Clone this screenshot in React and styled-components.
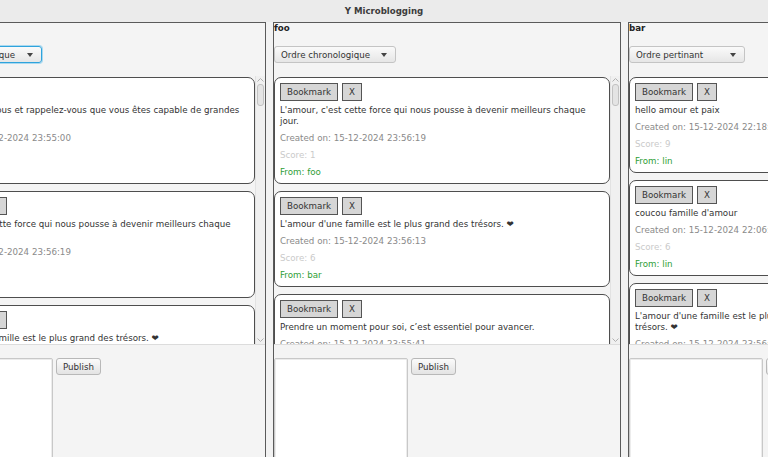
import React from 'react'
import styled, { createGlobalStyle } from 'styled-components'

const Global = createGlobalStyle`
  html, body {
    margin: 0;
    padding: 0;
    background: #f2f2f2;
    font-family: "DejaVu Sans", "Liberation Sans", sans-serif;
    font-size: 8.7px;
    color: #333;
  }
  * { box-sizing: border-box; }
`

const Window = styled.div`
  width: 768px;
  height: 457px;
  display: flex;
  flex-direction: column;
  overflow: hidden;
  background: #f2f2f2;
`

const TitleBar = styled.div`
  height: 22px;
  flex-shrink: 0;
  display: flex;
  align-items: center;
  justify-content: center;
  background: #ebebeb;
  font-weight: bold;
  font-size: 8.6px;
  color: #3c3c3c;
`

const Viewport = styled.div`
  flex: 1;
  min-height: 0;
  overflow: hidden;
`

const Columns = styled.div`
  display: flex;
  gap: 7px;
  height: 100%;
  margin-left: -82px;
`

const Column = styled.section`
  width: ${p => p.$width}px;
  flex-shrink: 0;
  display: flex;
  flex-direction: column;
  border: 1px solid #5a5a5a;
  border-bottom: none;
  background: #f4f4f4;
  overflow: hidden;
`

const ColumnTitle = styled.div`
  height: 11px;
  flex-shrink: 0;
  line-height: 11px;
  font-weight: bold;
  color: #222;
`

const Combo = styled.div`
  width: ${p => p.$width}px;
  height: 17px;
  flex-shrink: 0;
  margin-top: 12px;
  display: flex;
  align-items: center;
  justify-content: space-between;
  padding: 0 6px 0 6px;
  border: 1px solid ${p => (p.$focused ? '#2fa3dc' : '#c4c4c4')};
  border-radius: 3px;
  background: linear-gradient(#fafafa, #e6e6e6);
  box-shadow: ${p => (p.$focused ? '0 0 0 1px #a9d9f0' : 'none')};
  color: #333;
  white-space: nowrap;
`

const Caret = styled.span`
  width: 0;
  height: 0;
  border-left: 3px solid transparent;
  border-right: 3px solid transparent;
  border-top: 4px solid #444;
  margin-right: 2px;
`

const ListArea = styled.div`
  margin-top: 13px;
  height: 268px;
  display: flex;
  flex-shrink: 0;
`

const Cards = styled.div`
  flex: 1;
  min-width: 0;
  overflow: hidden;
  display: flex;
  flex-direction: column;
  gap: 7px;
  padding-top: 1px;
`

const Card = styled.article`
  flex-shrink: 0;
  display: flex;
  flex-direction: column;
  gap: 6px;
  padding: 5px 5px 5px;
  background: #fff;
  border: 1px solid #4e4e4e;
  border-radius: 7px;
  line-height: 11px;
`

const ButtonRow = styled.div`
  display: flex;
  gap: 4px;
  margin-bottom: -2px;
`

const SquareButton = styled.button`
  height: 18px;
  padding: 0 6px;
  border: 1px solid #555;
  border-radius: 0;
  background: #d6d6d6;
  font: inherit;
  color: #333;
`

const Label = styled.div`
  color: ${p => p.$color || '#333'};
`

const ScrollBar = styled.div`
  width: 10px;
  flex-shrink: 0;
  display: flex;
  flex-direction: column;
  align-items: center;
  justify-content: space-between;
  background: #f0f0f0;
  border-left: 1px solid #e2e2e2;
  padding: 2px 0 2px;
`

const Track = styled.div`
  flex: 1;
  width: 100%;
  display: flex;
  justify-content: center;
  padding-top: 2px;
`

const Thumb = styled.div`
  width: 7px;
  height: 22px;
  border-radius: 3px;
  border: 1px solid #c2c2c2;
  background: #e4e4e4;
`

const Composer = styled.div`
  flex: 1;
  min-height: 0;
  display: flex;
  align-items: flex-start;
  gap: 3px;
  padding-top: 13px;
  border-top: 1px solid #dcdcdc;
`

const TextArea = styled.div`
  width: 134px;
  height: 130px;
  flex-shrink: 0;
  background: #fff;
  border: 1px solid #c8c8c8;
  border-radius: 2px;
  box-shadow: inset 0 0 0 1px #ececec;
`

const PublishButton = styled.button`
  height: 17px;
  padding: 0 6px;
  border: 1px solid #b8b8b8;
  border-radius: 3px;
  background: linear-gradient(#fbfbfb, #e3e3e3);
  font: inherit;
  color: #333;
`

const Chevron = ({ up }) => (
  <svg width="7" height="4" viewBox="0 0 7 4">
    <path d={up ? 'M0.5 3.5 L3.5 0.5 L6.5 3.5' : 'M0.5 0.5 L3.5 3.5 L6.5 0.5'} fill="none" stroke="#b0b0b0" strokeWidth="1" />
  </svg>
)

const Post = ({ text, created, score, from, deletable = true }) => (
  <Card>
    <ButtonRow>
      <SquareButton>Bookmark</SquareButton>
      {deletable && <SquareButton>X</SquareButton>}
    </ButtonRow>
    <Label>{text}</Label>
    <Label $color="#8a8a8a">Created on: {created}</Label>
    <Label $color="#cacaca">Score: {score}</Label>
    <Label $color="#2f9e36">From: {from}</Label>
  </Card>
)

const HEART = '\u2764\uFE0E'

const feeds = [
  {
    name: '',
    width: 348,
    order: 'Ordre chronologique',
    comboWidth: 123,
    focused: true,
    posts: [
      { text: 'Prenez soin de vous et rappelez-vous que vous êtes capable de grandes choses.', created: '15-12-2024 23:55:00', score: 3, from: 'foo', deletable: false },
      { text: "L'amour, c'est cette force qui nous pousse à devenir meilleurs chaque jour.", created: '15-12-2024 23:56:19', score: 1, from: 'foo' },
      { text: `L'amour d'une famille est le plus grand des trésors. ${HEART}`, created: '15-12-2024 23:56:13', score: 6, from: 'bar' },
    ],
  },
  {
    name: 'foo',
    width: 348,
    order: 'Ordre chronologique',
    comboWidth: 122,
    posts: [
      { text: "L'amour, c'est cette force qui nous pousse à devenir meilleurs chaque jour.", created: '15-12-2024 23:56:19', score: 1, from: 'foo' },
      { text: `L'amour d'une famille est le plus grand des trésors. ${HEART}`, created: '15-12-2024 23:56:13', score: 6, from: 'bar' },
      { text: 'Prendre un moment pour soi, c’est essentiel pour avancer.', created: '15-12-2024 23:55:41', score: 2, from: 'foo' },
    ],
  },
  {
    name: 'bar',
    width: 240,
    order: 'Ordre pertinant',
    comboWidth: 116,
    posts: [
      { text: 'hello amour et paix', created: '15-12-2024 22:18:02', score: 9, from: 'lin' },
      { text: "coucou famille d'amour", created: '15-12-2024 22:06:45', score: 6, from: 'lin' },
      { text: `L'amour d'une famille est le plus grand des trésors. ${HEART}`, created: '15-12-2024 23:56:13', score: 6, from: 'bar' },
    ],
  },
]

export default function App() {
  return (
    <Window>
      <Global />
      <TitleBar>Y Microblogging</TitleBar>
      <Viewport>
        <Columns>
          {feeds.map((feed, i) => (
            <Column key={i} $width={feed.width}>
              <ColumnTitle>{feed.name}</ColumnTitle>
              <Combo $width={feed.comboWidth} $focused={feed.focused}>
                <span>{feed.order}</span>
                <Caret />
              </Combo>
              <ListArea>
                <Cards>
                  {feed.posts.map((p, j) => (
                    <Post key={j} {...p} />
                  ))}
                </Cards>
                <ScrollBar>
                  <Chevron up />
                  <Track>
                    <Thumb />
                  </Track>
                  <Chevron />
                </ScrollBar>
              </ListArea>
              <Composer>
                <TextArea />
                <PublishButton>Publish</PublishButton>
              </Composer>
            </Column>
          ))}
        </Columns>
      </Viewport>
    </Window>
  )
}
